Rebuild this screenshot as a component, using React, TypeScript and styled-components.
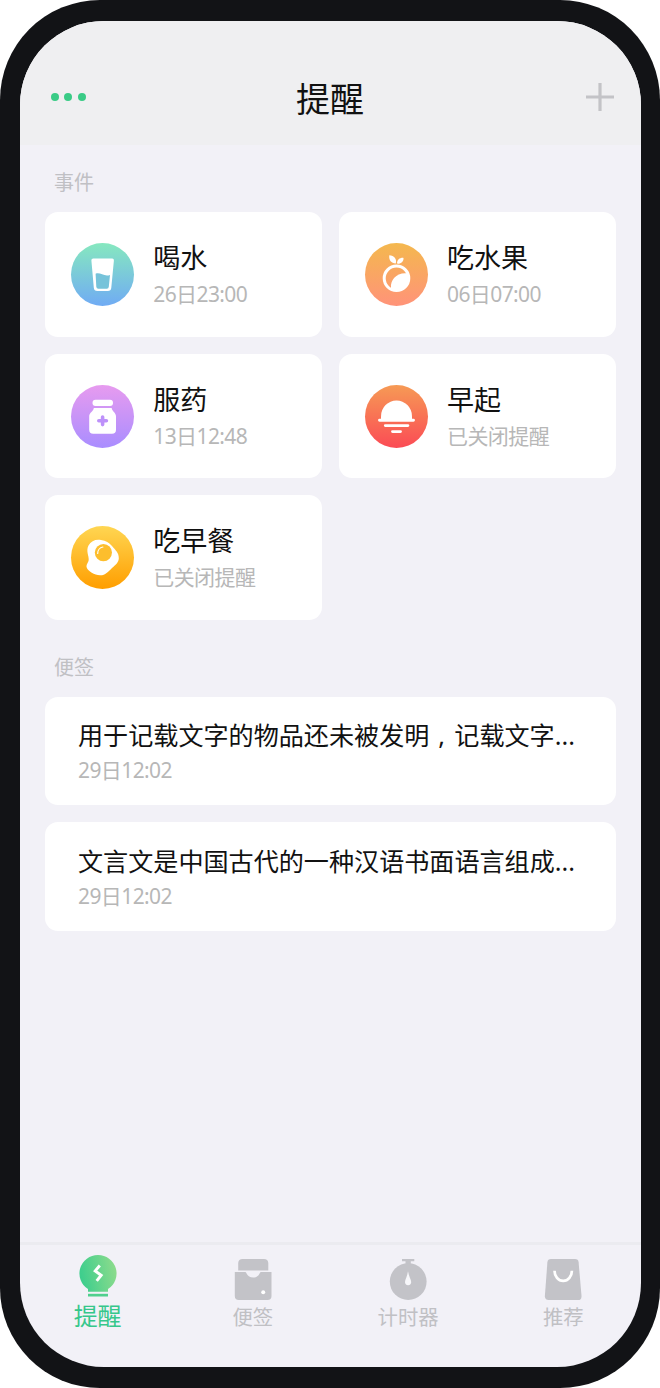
import React from 'react';
import styled, { createGlobalStyle, css } from 'styled-components';

const GlobalStyle = createGlobalStyle`
  * { box-sizing: border-box; }
  body {
    margin: 0;
    background: #fff;
    font-family: "Noto Sans", "Noto Sans CJK SC", sans-serif;
  }
`;

const Phone = styled.div`
  width: 660px;
  height: 1388px;
  padding: 21px 19px 21px 20px;
  background: #121316;
  border-radius: 100px;
`;

const Screen = styled.div`
  height: 100%;
  display: flex;
  flex-direction: column;
  overflow: hidden;
  border-radius: 84px;
  background: #f2f1f7;
`;

const Header = styled.header`
  height: 124px;
  flex: none;
  display: grid;
  grid-template-columns: 1fr auto 1fr;
  align-items: center;
  padding: 28px 27px 0 31px;
  background: #efeff1;
`;

const Title = styled.h1`
  margin: 0;
  padding: 3px 5px 0 0;
  font-size: 34px;
  line-height: 50px;
  font-weight: 400;
  color: #111;
`;

const MenuButton = styled.button`
  display: flex;
  gap: 5.4px;
  padding: 0;
  border: 0;
  background: none;
`;

const Dot = styled.span`
  width: 8px;
  height: 8px;
  border-radius: 50%;
  background: #3acb86;
`;

const AddButton = styled.button`
  justify-self: end;
  display: flex;
  padding: 0;
  border: 0;
  background: none;
`;

const Content = styled.main`
  flex: 1;
  padding: 0 25.5px 0 25px;
`;

const SectionLabel = styled.h2<{ $top: number; $bottom: number }>`
  margin: 0;
  padding: ${(p) => p.$top}px 0 ${(p) => p.$bottom}px 9px;
  font-size: 20px;
  line-height: 30px;
  font-weight: 400;
  color: #c0c0c4;
`;

const EventGrid = styled.div`
  display: grid;
  grid-template-columns: 1fr 1fr;
  gap: 17px;
`;

const card = css`
  background: #fff;
  border-radius: 13px;
`;

const EventCard = styled.article`
  ${card}
  height: 124.5px;
  display: flex;
  align-items: center;
  padding: 1px 0 0 26px;
  gap: 19.3px;
`;

const EventIcon = styled.span<{ $from: string; $to: string }>`
  width: 63px;
  height: 63px;
  flex: none;
  border-radius: 50%;
  background: linear-gradient(${(p) => p.$from}, ${(p) => p.$to});
  svg { display: block; }
`;

const EventText = styled.div`
  padding-top: 1px;
`;

const EventName = styled.h3`
  margin: 0;
  font-size: 27px;
  line-height: 38px;
  font-weight: 400;
  color: #111;
`;

const Time = styled.p`
  margin: 0;
  font-size: 21px;
  line-height: 34px;
  font-weight: 400;
  letter-spacing: -0.6px;
  color: #b7b7b7;
`;

const NoteList = styled.div`
  display: flex;
  flex-direction: column;
  gap: 17.5px;
`;

const NoteCard = styled.article`
  ${card}
  height: 108.3px;
  padding: 20.5px 33px 0;
`;

const NoteText = styled.h3`
  margin: 0;
  font-size: 25.1px;
  line-height: 36px;
  font-weight: 400;
  color: #111;
  white-space: nowrap;
`;

const Comma = styled.span`
  display: inline-block;
  width: 25px;
  line-height: 1;
  text-indent: 9px;
`;

const TabBar = styled.nav`
  height: 125px;
  flex: none;
  display: grid;
  grid-template-columns: repeat(4, 1fr);
  border-top: 3px solid #ebebf0;
`;

const Tab = styled.a<{ $active?: boolean }>`
  display: flex;
  flex-direction: column;
  align-items: center;
  padding-top: 9px;
  color: ${(p) => (p.$active ? '#36c78b' : '#c0c0c4')};
  font-size: ${(p) => (p.$active ? 24 : 20.4)}px;
  line-height: 30px;
  svg { display: block; margin-bottom: ${(p) => (p.$active ? 1 : 2)}px; }
`;

const GlassIcon = () => (
  <svg width="63" height="63" viewBox="0 0 63 63">
    <path d="M22.3 15.5h18.9q1.9 0 1.7 1.9l-2.6 27.3q-.3 3.300-3.500 3.300h-10.500q-3.200 0-3.500-3.300L20.400 17.400q-.2-1.900 1.900-1.900z" fill="#fff" />
    <path d="M24.600 30.800c4.500-2 8.500 3.500 14.400 1.200l-1.200 11.800q-.2 2-2 2h-8.500q-1.800 0-2-2z" fill="#76c3da" />
  </svg>
);

const FruitIcon = () => (
  <svg width="63" height="63" viewBox="0 0 63 63">
    <circle cx="31.500" cy="35.300" r="12.300" fill="none" stroke="#fff" strokeWidth="3" />
    <path d="M26 44.500c-1-7.500 6-15.500 16.300-14.200q2.700 6.700-1.300 12.300-6 7-13 4.400z" fill="#fff" />
    <path d="M30.800 20.600c-4.500-.2-7.200-3.500-6.500-8.300 4.800.4 7.800 3.500 6.500 8.300zM32 20.600c.2-3.800 2.700-6 6.500-5.700.3 3.500-2.500 6.200-6.500 5.700z" fill="#fff" />
  </svg>
);

const MedicineIcon = () => (
  <svg width="63" height="63" viewBox="0 0 63 63">
    <rect x="21.500" y="14.800" width="20.500" height="6.200" rx="3" fill="#fff" />
    <path d="M22.800 23h17.900c0 3 4.300 4.500 4.300 8.500v13.200q0 4-4 4H22.200q-4 0-4-4V31.500c0-4 4.600-5.500 4.600-8.500z" fill="#fff" />
    <path d="M31.600 32v7.600M27.800 35.800h7.600" stroke="#bd91fa" strokeWidth="3.600" strokeLinecap="round" />
  </svg>
);

const SunriseIcon = () => (
  <svg width="63" height="63" viewBox="0 0 63 63">
    <path d="M16 35v-3.600a15.500 16 0 0 1 31 0V35z" fill="#fff" />
    <path d="M14.500 35.200h34M20.300 40.600h22.600M27.500 46.600h8" stroke="#fff" strokeWidth="2.900" strokeLinecap="round" />
  </svg>
);

const EggIcon = () => (
  <svg width="63" height="63" viewBox="0 0 63 63">
    <path d="M17.500 19.500c2.500-4.700 7.500-6.500 12.500-5.500 5 .8 8 2.500 11 6 3.200 4 7 6.500 6.800 12.500-.3 4-3.300 6.500-6.800 9.500-4 4-6.800 7.500-12 7.300-5.500-.3-12-4-13.300-7.800-.8-3 1.600-4.800 2-7.500.3-4.500-3-9-.2-14.500z" fill="#fff" />
    <circle cx="32.400" cy="26.600" r="8.600" fill="#fdbe2d" />
    <path d="M26.700 27.500a6.300 6.300 0 0 1 5.200-6.500" fill="none" stroke="#fff" strokeWidth="1.200" strokeLinecap="round" />
  </svg>
);

const BulbIcon = () => (
  <svg width="38" height="46" viewBox="0 0 38 46">
    <defs>
      <linearGradient id="bulb" x1="0" x2="1" y1=".3" y2=".1">
        <stop offset="0" stopColor="#3fce8d" />
        <stop offset="1" stopColor="#91dc8c" />
      </linearGradient>
    </defs>
    <path d="M19 1a18.500 18.500 0 0 1 10 34.100v2.700H9v-2.700A18.500 18.500 0 0 1 19 1z" fill="url(#bulb)" />
    <path d="M9 39.800h20v2.700H9z" fill="#4fd08d" />
    <path d="M20.800 11.500l-4.600 5.400 6 4.300-4.500 5.700" fill="none" stroke="#fff" strokeWidth="2.900" />
  </svg>
);

const NoteIcon = () => (
  <svg width="38" height="46" viewBox="0 0 38 46">
    <path d="M8.500 5h21.500q4 0 4.300 4v7.600H4.200V9q.3-4 4.300-4z" fill="#c3c3c8" />
    <path d="M.8 18H11q1 0 1.600 1.400a7.200 7.200 0 0 0 13 0Q26.200 18 27.200 18h10.300v24q0 4-4 4H4.800q-4 0-4-4z" fill="#c3c3c8" />
    <circle cx="29.200" cy="38.200" r="2" fill="#fff" />
  </svg>
);

const TimerIcon = () => (
  <svg width="38" height="46" viewBox="0 0 38 46">
    <path d="M13 5h12.300v2.300h-3.500v3.500h-5.300V7.300H13z" fill="#c3c3c8" />
    <circle cx="19.200" cy="27.600" r="18.400" fill="#c3c3c8" />
    <path d="M19 17.300c.8 5 3.200 8.500 3.200 10.800a3.100 3.100 0 0 1-6.200 0c0-2.300 2.300-5.800 3-10.800z" fill="#f7f7fa" />
  </svg>
);

const BagIcon = () => (
  <svg width="38" height="46" viewBox="0 0 38 46">
    <path d="M7 5h24q3.300 0 3.600 3.300l2.900 33.500q.3 4.200-3.500 4.200H4.600q-4 0-3.700-4.200L3.400 8.300Q3.700 5 7 5z" fill="#c3c3c8" />
    <path d="M10.500 16.700c0 5.500 3.700 10.200 8.700 10.200s8.700-4.700 8.700-10.200" fill="none" stroke="#fff" strokeWidth="2.700" />
  </svg>
);

const events = [
  { name: '喝水', time: '26日23:00', from: '#86e8bf', to: '#70abf4', Icon: GlassIcon },
  { name: '吃水果', time: '06日07:00', from: '#f4b84e', to: '#ff9379', Icon: FruitIcon },
  { name: '服药', time: '13日12:48', from: '#e79bef', to: '#a98dff', Icon: MedicineIcon },
  { name: '早起', time: '已关闭提醒', from: '#f69a55', to: '#fb4b55', Icon: SunriseIcon },
  { name: '吃早餐', time: '已关闭提醒', from: '#ffd652', to: '#ff9e00', Icon: EggIcon },
];

const notes = [
  { text: <>用于记载文字的物品还未被发明<Comma>,</Comma>记载文字...</>, time: '29日12:02' },
  { text: <>文言文是中国古代的一种汉语书面语言组成...</>, time: '29日12:02' },
];

const tabs = [
  { label: '提醒', Icon: BulbIcon, active: true },
  { label: '便签', Icon: NoteIcon },
  { label: '计时器', Icon: TimerIcon },
  { label: '推荐', Icon: BagIcon },
];

export default function App() {
  return (
    <Phone>
      <GlobalStyle />
      <Screen>
        <Header>
          <MenuButton aria-label="菜单"><Dot /><Dot /><Dot /></MenuButton>
          <Title>提醒</Title>
          <AddButton aria-label="添加">
            <svg width="28" height="28" viewBox="0 0 28 28">
              <path d="M14 0v28M0 14h28" stroke="#c3c3c7" strokeWidth="3.200" />
            </svg>
          </AddButton>
        </Header>
        <Content>
          <SectionLabel $top={23} $bottom={14}>事件</SectionLabel>
          <EventGrid>
            {events.map(({ name, time, from, to, Icon }) => (
              <EventCard key={name}>
                <EventIcon $from={from} $to={to}><Icon /></EventIcon>
                <EventText>
                  <EventName>{name}</EventName>
                  <Time>{time}</Time>
                </EventText>
              </EventCard>
            ))}
          </EventGrid>
          <SectionLabel $top={33.5} $bottom={13.7}>便签</SectionLabel>
          <NoteList>
            {notes.map(({ text, time }, i) => (
              <NoteCard key={i}>
                <NoteText>{text}</NoteText>
                <Time>{time}</Time>
              </NoteCard>
            ))}
          </NoteList>
        </Content>
        <TabBar>
          {tabs.map(({ label, Icon, active }) => (
            <Tab key={label} $active={active}>
              <Icon />
              {label}
            </Tab>
          ))}
        </TabBar>
      </Screen>
    </Phone>
  );
}
